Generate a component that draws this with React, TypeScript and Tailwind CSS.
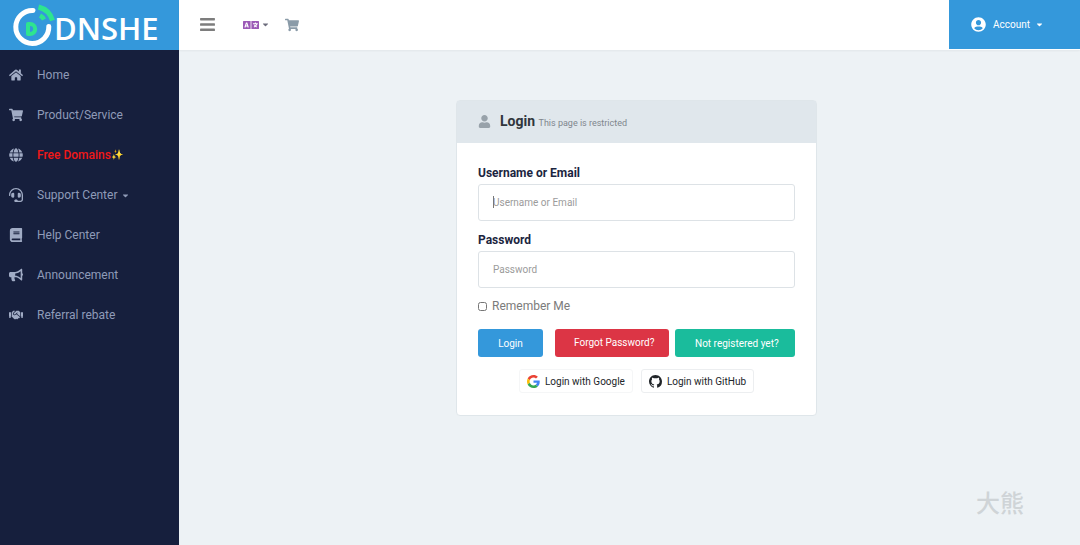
import { useState } from "react";
import type { IconType } from "react-icons";
import {
  FaBars,
  FaBook,
  FaBullhorn,
  FaCaretDown,
  FaGlobe,
  FaHandshake,
  FaHeadset,
  FaHome,
  FaLanguage,
  FaShoppingCart,
  FaUser,
  FaUserCircle,
} from "react-icons/fa";

interface NavItem {
  label: string;
  icon: IconType;
  emoji?: string;
  highlight?: boolean;
  dropdown?: boolean;
}

const navItems: NavItem[] = [
  { label: "Home", icon: FaHome },
  { label: "Product/Service", icon: FaShoppingCart },
  { label: "Free Domains", icon: FaGlobe, emoji: "✨", highlight: true },
  { label: "Support Center", icon: FaHeadset, dropdown: true },
  { label: "Help Center", icon: FaBook },
  { label: "Announcement", icon: FaBullhorn },
  { label: "Referral rebate", icon: FaHandshake },
];

const Logo = () => (
  <a href="#" aria-label="DNSHE" className="flex h-[50px] items-center bg-[#3498db] pl-3">
    <svg viewBox="0 0 44 44" className="h-11 w-11 shrink-0" fill="none" aria-hidden="true">
      <path d="M21 7.500A16.500 16.500 0 1 0 36.800 23.500" stroke="#fff" strokeWidth="5" strokeLinecap="round" />
      <path d="M26.500 4A19.500 19.500 0 0 1 40.500 17.500" stroke="#2ee58f" strokeWidth="5" strokeLinecap="butt" />
      <path d="M28 12.500Q30.500 13.800 32 16.500" stroke="#2ee58f" strokeWidth="4.500" strokeLinecap="butt" />
      <path d="M16 21h2.200a5 5 0 0 1 0 10H16z" stroke="#2ee58f" strokeWidth="4" strokeLinejoin="round" />
    </svg>
    <span className="-ml-[2px] pt-[6px] font-['Open_Sans',sans-serif] text-[31px] leading-8 font-semibold text-white">
      DNSHE
    </span>
  </a>
);

const GoogleIcon = () => (
  <svg viewBox="0 0 48 48" className="h-[13px] w-[13px]" aria-hidden="true">
    <path fill="#EA4335" d="M24 9.500c3.540 0 6.710 1.220 9.210 3.600l6.850-6.850C35.900 2.380 30.470 0 24 0 14.620 0 6.510 5.380 2.560 13.220l7.980 6.190C12.430 13.720 17.740 9.500 24 9.500z" />
    <path fill="#4285F4" d="M46.980 24.550c0-1.570-.15-3.090-.38-4.550H24v9.020h12.940c-.58 2.960-2.260 5.480-4.780 7.180l7.730 6c4.510-4.180 7.090-10.360 7.090-17.650z" />
    <path fill="#FBBC05" d="M10.530 28.590c-.48-1.450-.76-2.990-.76-4.590s.27-3.140.76-4.590l-7.980-6.190C.92 16.460 0 20.120 0 24c0 3.880.92 7.540 2.560 10.780l7.970-6.190z" />
    <path fill="#34A853" d="M24 48c6.480 0 11.930-2.130 15.890-5.810l-7.730-6c-2.150 1.450-4.920 2.300-8.160 2.300-6.260 0-11.570-4.220-13.470-9.910l-7.980 6.190C6.510 42.620 14.620 48 24 48z" />
  </svg>
);

const GithubIcon = () => (
  <svg viewBox="0 0 16 16" className="h-[13px] w-[13px]" fill="currentColor" aria-hidden="true">
    <path d="M8 0C3.580 0 0 3.580 0 8c0 3.540 2.290 6.530 5.470 7.590.4.070.55-.17.55-.38 0-.19-.01-.82-.01-1.490-2.010.37-2.530-.49-2.690-.94-.09-.23-.48-.94-.82-1.130-.28-.15-.68-.52-.01-.53.63-.01 1.080.58 1.230.82.72 1.210 1.870.87 2.330.66.07-.52.28-.87.51-1.070-1.780-.2-3.640-.89-3.640-3.950 0-.87.31-1.590.82-2.150-.08-.2-.36-1.020.08-2.120 0 0 .67-.21 2.200.82.64-.18 1.320-.27 2-.27s1.360.09 2 .27c1.530-1.040 2.200-.82 2.200-.82.44 1.100.16 1.920.08 2.120.51.56.82 1.270.82 2.150 0 3.070-1.870 3.750-3.650 3.950.29.25.54.73.54 1.480 0 1.070-.01 1.930-.01 2.200 0 .21.15.46.55.38A8.010 8.010 0 0 0 16 8c0-4.420-3.580-8-8-8z" />
  </svg>
);

const Sidebar = () => (
  <aside className="w-[179px] shrink-0 bg-[#161f3d]">
    <Logo />
    <nav className="pt-[5px]">
      <ul>
        {navItems.map(({ label, icon: Icon, emoji, highlight, dropdown }) => (
          <li key={label}>
            <a href="#" className="flex h-10 items-center pl-[9px] text-xs text-[#8f9bb8]">
              <span className="flex w-7 shrink-0">
                <Icon size={14} className="text-[#a0abc4]" />
              </span>
              <span className={highlight ? "font-medium text-[#f01818]" : ""}>{label}</span>
              {emoji && <span className="text-[10px]">{emoji}</span>}
              {dropdown && <FaCaretDown size={9} className="ml-1" />}
            </a>
          </li>
        ))}
      </ul>
    </nav>
  </aside>
);

const TopBar = () => (
  <header className="flex h-[50px] items-center bg-white pb-px shadow-xs">
    <button type="button" aria-label="Toggle menu" className="ml-5 text-[#7d7d7d]">
      <FaBars size={17} />
    </button>
    <button type="button" aria-label="Language" className="ml-[27px] flex items-center text-[#9b59b6]">
      <FaLanguage size={16} />
      <FaCaretDown size={9} className="ml-[2px] text-[#6c6c7c]" />
    </button>
    <a href="#" aria-label="Cart" className="ml-[15px] text-[#8a9ba8]">
      <FaShoppingCart size={14} />
    </a>
    <button type="button" className="ml-auto flex h-full w-[131px] items-center bg-[#3498db] pl-[22px] text-[10px] text-white">
      <FaUserCircle size={15} className="mr-[7px]" />
      Account
      <FaCaretDown size={9} className="ml-[5px]" />
    </button>
  </header>
);

const LoginForm = () => {
  const [form, setForm] = useState({ username: "", password: "", remember: false });

  const handleChange = (e: React.ChangeEvent<HTMLInputElement>) => {
    const { name, value, type, checked } = e.target;
    setForm((prev) => ({ ...prev, [name]: type === "checkbox" ? checked : value }));
  };

  return (
    <section className="w-full max-w-[361px] rounded-sm border border-[#dfe6ea] bg-white">
      <div className="flex h-[42px] items-center bg-[#e0e7ec] pb-[2px] pl-[21px]">
        <FaUser size={13} className="mr-[9px] text-[#98a2aa]" />
        <h1 className="text-sm font-bold text-[#30363c]">
          Login <small className="text-[9px] font-normal text-[#7f868c]">This page is restricted</small>
        </h1>
      </div>
      <form className="px-[21px] pt-[22px] pb-[22px]" onSubmit={(e) => e.preventDefault()}>
        <label htmlFor="username" className="block text-xs leading-4 font-bold text-[#1b2540]">
          Username or Email
        </label>
        <div className="relative mt-[3px]">
          <input
            id="username"
            name="username"
            type="text"
            autoFocus
            placeholder="Username or Email"
            value={form.username}
            onChange={handleChange}
            className="block h-[37px] w-full rounded-[3px] border border-[#dde2e6] px-[14px] text-[10px] outline-none placeholder:text-[#9b9b9b]"
          />
          {/* caret */}
          {!form.username && <span className="pointer-events-none absolute top-3 left-[15px] h-3 w-px bg-[#777]" />}
        </div>
        <label htmlFor="password" className="mt-[11px] block text-xs leading-4 font-bold text-[#1b2540]">
          Password
        </label>
        <input
          id="password"
          name="password"
          type="password"
          placeholder="Password"
          value={form.password}
          onChange={handleChange}
          className="mt-[3px] block h-[37px] w-full rounded-[3px] border border-[#dde2e6] px-[14px] text-[10px] outline-none placeholder:text-[#9b9b9b]"
        />
        <label className="mt-[10px] flex items-center gap-[5px] text-xs leading-4 text-[#7b7b7b]">
          <input
            type="checkbox"
            name="remember"
            checked={form.remember}
            onChange={handleChange}
            className="h-[9px] w-[9px]"
          />
          Remember Me
        </label>
        <div className="mt-[15px] flex h-7 text-[10px] text-white">
          <button type="submit" className="w-[65px] rounded-[3px] bg-[#3498db]">
            Login
          </button>
          <a href="#" className="ml-3 flex w-[114px] items-center rounded-[3px] bg-[#dc3545] pb-[2px] pl-[19px]">
            Forgot Password?
          </a>
          <a href="#" className="ml-[6px] flex flex-1 items-center rounded-[3px] bg-[#1abc9c] pl-5">
            Not registered yet?
          </a>
        </div>
        <div className="mt-3 flex justify-center gap-2 text-[10px] text-[#212529]">
          <button type="button" className="flex h-6 items-center gap-[5px] rounded-[3px] border border-[#f5f6f7] px-[7px]">
            <GoogleIcon />
            Login with Google
          </button>
          <button type="button" className="flex h-6 items-center gap-[5px] rounded-[3px] border border-[#eceef0] px-[7px]">
            <GithubIcon />
            Login with GitHub
          </button>
        </div>
      </form>
    </section>
  );
};

const App = () => (
  <div className="flex min-h-screen bg-[#edf2f5] font-[Roboto,'Noto_Sans_CJK_SC',sans-serif]">
    <Sidebar />
    <div className="flex min-w-0 flex-1 flex-col">
      <TopBar />
      <main className="flex flex-1 items-start justify-center pt-[50px] pl-[14px]">
        <LoginForm />
      </main>
      <p className="self-end pr-14 pb-[23px] text-2xl leading-9 font-medium text-[#cfd4d7]">大熊</p>
    </div>
  </div>
);

export default App;
